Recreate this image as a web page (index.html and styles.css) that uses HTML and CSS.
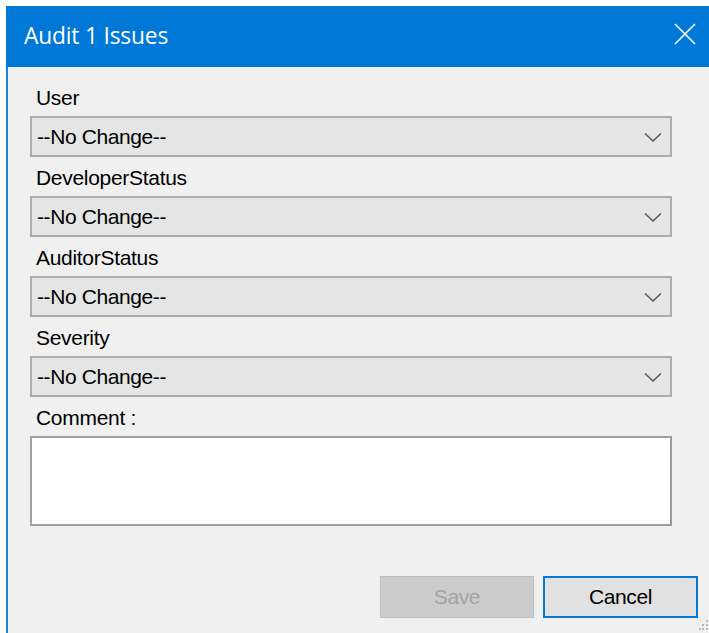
FILE: index.html
```html
<!DOCTYPE html>
<html lang="en">
<head>
<meta charset="utf-8">
<title>Audit 1 Issues</title>
<link rel="stylesheet" href="styles.css">
</head>
<body>
<div class="window">
  <header class="titlebar">
    <span class="title">Audit 1 Issues</span>
    <button class="close" aria-label="Close">
      <svg width="22" height="22" viewBox="0 0 22 22"><path d="M1 1 L21 21 M21 1 L1 21" stroke="#fff" stroke-width="1.6" fill="none"/></svg>
    </button>
  </header>
  <main class="content">
    <div class="field">
      <label class="label">User</label>
      <div class="combo"><span>--No Change--</span><svg class="chev" width="18" height="11" viewBox="0 0 18 11"><path d="M1 1.5 L9 9 L17 1.5" stroke="#5a5a5a" stroke-width="1.6" fill="none"/></svg></div>
    </div>
    <div class="field">
      <label class="label">DeveloperStatus</label>
      <div class="combo"><span>--No Change--</span><svg class="chev" width="18" height="11" viewBox="0 0 18 11"><path d="M1 1.5 L9 9 L17 1.5" stroke="#5a5a5a" stroke-width="1.6" fill="none"/></svg></div>
    </div>
    <div class="field">
      <label class="label">AuditorStatus</label>
      <div class="combo"><span>--No Change--</span><svg class="chev" width="18" height="11" viewBox="0 0 18 11"><path d="M1 1.5 L9 9 L17 1.5" stroke="#5a5a5a" stroke-width="1.6" fill="none"/></svg></div>
    </div>
    <div class="field">
      <label class="label">Severity</label>
      <div class="combo"><span>--No Change--</span><svg class="chev" width="18" height="11" viewBox="0 0 18 11"><path d="M1 1.5 L9 9 L17 1.5" stroke="#5a5a5a" stroke-width="1.6" fill="none"/></svg></div>
    </div>
    <div class="field">
      <label class="label">Comment :</label>
      <div class="textbox"></div>
    </div>
  </main>
  <footer class="buttons">
    <button class="btn btn-disabled" disabled>Save</button>
    <button class="btn btn-default">Cancel</button>
    <svg class="grip" width="10" height="14" viewBox="0 0 10 14">
      <rect x="7" y="2" width="2" height="2" fill="#b8b8b8"/>
      <rect x="3" y="6" width="2" height="2" fill="#b8b8b8"/>
      <rect x="7" y="6" width="2" height="2" fill="#b8b8b8"/>
      <rect x="0" y="10" width="2" height="2" fill="#b8b8b8"/>
      <rect x="3" y="10" width="2" height="2" fill="#b8b8b8"/>
      <rect x="7" y="10" width="2" height="2" fill="#b8b8b8"/>
    </svg>
  </footer>
</div>
</body>
</html>
```
FILE: styles.css
```css
html, body {
  margin: 0;
  padding: 0;
  background: #ffffff;
  height: 100%;
}

body {
  padding: 6px 0 0 6px;
  box-sizing: border-box;
  font-family: "Liberation Sans", Arial, sans-serif;
  overflow: hidden;
}

.window {
  display: flex;
  flex-direction: column;
  height: 627px;
  background: #f0f0f0;
  border-left: 2px solid #1a83da;
}

.titlebar {
  height: 61px;
  flex: none;
  background: #0078d7;
  display: flex;
  align-items: center;
  justify-content: space-between;
  margin-left: -2px;
  padding: 0 13px 0 18px;
}

.title {
  color: #ffffff;
  font-family: "Open Sans", "Noto Sans", sans-serif;
  font-size: 22.8px;
  letter-spacing: -0.2px;
  margin-top: -2px;
}

.close {
  background: none;
  border: 0;
  padding: 0;
  width: 22px;
  height: 22px;
  margin-top: -6px;
  display: flex;
}

.content {
  padding: 19px 0 0 22px;
  display: flex;
  flex-direction: column;
  gap: 9px;
}

.field {
  display: flex;
  flex-direction: column;
}

.label {
  font-size: 21px;
  line-height: 24px;
  height: 24px;
  margin-bottom: 6px;
  padding-left: 6px;
  color: #000000;
  letter-spacing: -0.3px;
}

.combo {
  width: 642px;
  height: 41px;
  box-sizing: border-box;
  background: #e5e5e5;
  border: 2px solid #adadad;
  display: flex;
  align-items: center;
  justify-content: space-between;
  padding: 0 8px 0 5px;
  font-size: 21px;
  color: #000000;
  letter-spacing: -0.4px;
}

.combo span {
  margin-top: 1px;
}

.chev {
  margin-top: 1px;
}

.textbox {
  width: 642px;
  height: 90px;
  box-sizing: border-box;
  background: #ffffff;
  border: 2px solid #a0a0a0;
  border-right-color: #9a9a9a;
}

.buttons {
  position: relative;
  display: flex;
  justify-content: flex-end;
  gap: 9px;
  padding: 0 11px 0 0;
  margin-top: 50px;
}

.btn {
  width: 154px;
  height: 42px;
  box-sizing: border-box;
  font-family: "Liberation Sans", Arial, sans-serif;
  font-size: 21px;
  letter-spacing: -0.4px;
  padding: 0;
}

.btn-disabled {
  background: #cccccc;
  border: 1px solid #bfbfbf;
  color: #a3a3a3;
}

.btn-default {
  width: 155px;
  background: #e1e1e1;
  border: 2px solid #0078d7;
  color: #000000;
}

.grip {
  position: absolute;
  right: 0;
  bottom: -14px;
}
```
